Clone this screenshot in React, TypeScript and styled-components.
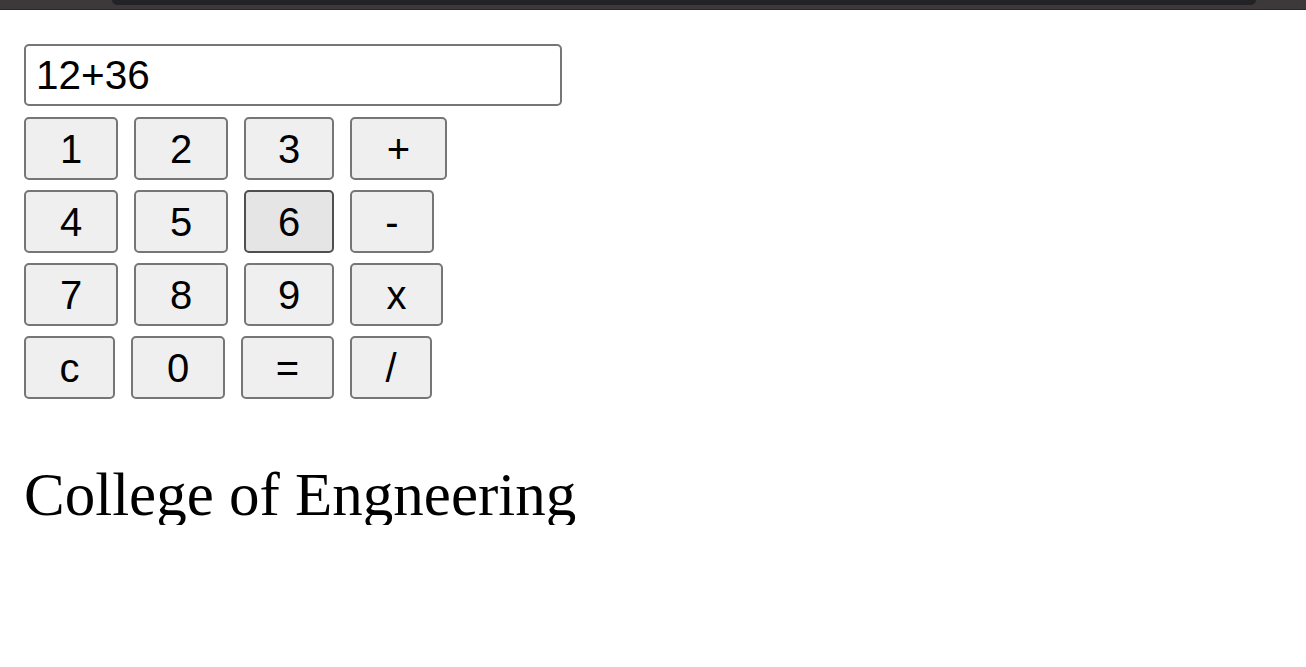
import React, { useState } from 'react'
import styled, { createGlobalStyle } from 'styled-components'

const GlobalStyle = createGlobalStyle`
  html, body {
    margin: 0;
    padding: 0;
    background: #ffffff;
  }
  body {
    font-family: "Liberation Serif", "Times New Roman", serif;
  }
`

const ChromeStrip = styled.div`
  height: 9px;
  background: #3d393a;
  border-bottom: 1px solid #2a2828;
  display: flex;
  padding-left: 112px;
  padding-right: 50px;
`

const ChromeTab = styled.div`
  flex: 1;
  height: 5px;
  background: #232326;
  border-radius: 0 0 8px 8px;
`

const Page = styled.div`
  padding: 34px 24px 0;
`

const Calculator = styled.div`
  display: flex;
  flex-direction: column;
  align-items: flex-start;
  gap: 10px;
`

const Display = styled.input`
  box-sizing: border-box;
  width: 538px;
  height: 62px;
  margin-bottom: 1px;
  padding: 0 10px;
  border: 2px solid #767676;
  border-radius: 5px;
  font-family: "Liberation Sans", Arial, sans-serif;
  font-size: 40.5px;
  color: #000000;
  background: #ffffff;
  outline: none;
`

const KeyRow = styled.div`
  display: flex;
  gap: 16px;
`

const Key = styled.button<{ $hover?: boolean; $w: number }>`
  box-sizing: border-box;
  width: ${({ $w }) => $w}px;
  height: 63px;
  padding: 0;
  display: flex;
  align-items: center;
  justify-content: center;
  border: 2px solid ${({ $hover }) => ($hover ? '#4f4f4f' : '#767676')};
  border-radius: 5px;
  background: ${({ $hover }) => ($hover ? '#e5e5e5' : '#efefef')};
  color: #000000;
  font-family: "Liberation Sans", Arial, sans-serif;
  font-size: 40px;
  line-height: 1;
  cursor: pointer;

  &:hover {
    background: #e5e5e5;
    border-color: #4f4f4f;
  }
`

const Title = styled.h1`
  margin: 66px 0 0;
  font-family: "Liberation Serif", "Times New Roman", serif;
  font-size: 61px;
  font-weight: normal;
  line-height: 60px;
  color: #000000;
`

type KeyDef = { label: string; w: number }

const rows: KeyDef[][] = [
  [{ label: '1', w: 94 }, { label: '2', w: 94 }, { label: '3', w: 90 }, { label: '+', w: 97 }],
  [{ label: '4', w: 94 }, { label: '5', w: 94 }, { label: '6', w: 90 }, { label: '-', w: 84 }],
  [{ label: '7', w: 94 }, { label: '8', w: 94 }, { label: '9', w: 90 }, { label: 'x', w: 93 }],
  [{ label: 'c', w: 91 }, { label: '0', w: 94 }, { label: '=', w: 93 }, { label: '/', w: 82 }],
]

const App = () => {
  const [value, setValue] = useState('12+36')

  const press = (k: string) => {
    if (k === 'c') {
      setValue('')
      return
    }
    if (k === '=') {
      try {
        // eslint-disable-next-line no-new-func
        const result = Function(`return (${value.replace(/x/g, '*')})`)()
        setValue(String(result))
      } catch (e) {
        setValue('Error')
      }
      return
    }
    setValue(value + k)
  }

  return (
    <>
      <GlobalStyle />
      <ChromeStrip>
        <ChromeTab />
      </ChromeStrip>
      <Page>
        <Calculator>
          <Display value={value} onChange={(e) => setValue(e.target.value)} />
          {rows.map((row) => (
            <KeyRow key={row.map((k) => k.label).join('')}>
              {row.map((k) => (
                <Key key={k.label} $w={k.w} $hover={k.label === '6'} onClick={() => press(k.label)}>
                  {k.label}
                </Key>
              ))}
            </KeyRow>
          ))}
        </Calculator>
        <Title>College of Engneering</Title>
      </Page>
    </>
  )
}

export default App
